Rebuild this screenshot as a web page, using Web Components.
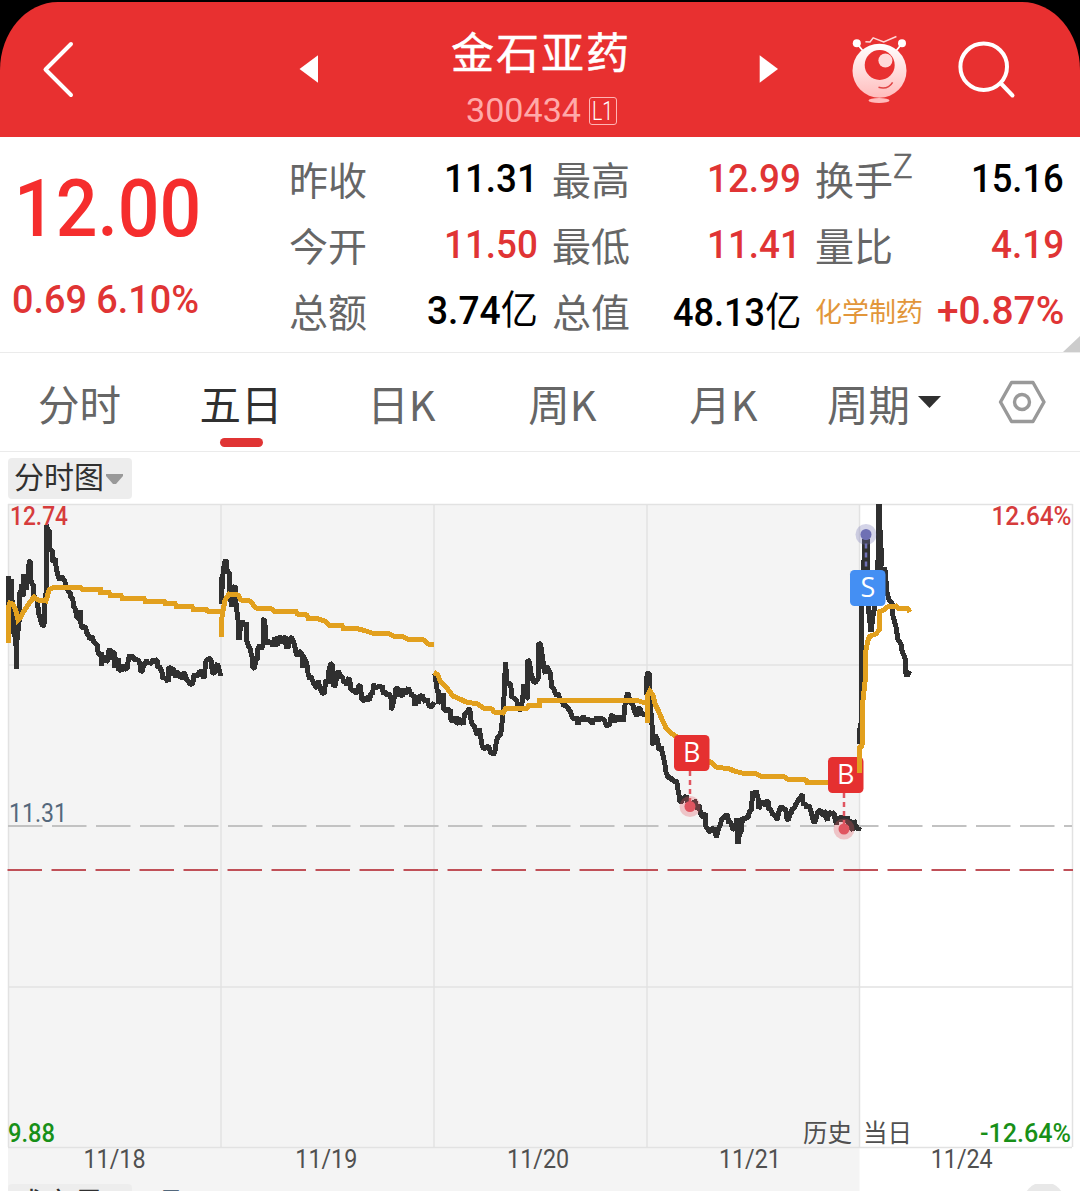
<!DOCTYPE html>
<html lang="zh-CN">
<head>
<meta charset="utf-8">
<title>金石亚药 300434</title>
<style>
  body {
    margin: 0;
    width: 1080px;
    height: 1191px;
    overflow: hidden;
    background: #fff;
    font-family: Roboto, "Noto Sans CJK SC", sans-serif;
  }
</style>
</head>
<body>
<stock-page></stock-page>

<script>
// Text squeezed to a given width, the digits are narrower than Roboto
class FitText extends HTMLElement {
  constructor() {
    super();
    this.attachShadow({mode: 'open'});
    this.shadowRoot.innerHTML = `<style>
      :host { display: block; flex: none; white-space: nowrap; line-height: 1.2; }
      span { display: inline-block; transform-origin: 0 50%; }
      ::slotted(i) { font-style: normal; font-weight: 400; }
    </style><span><slot></slot></span>`;
  }

  connectedCallback() {
    const span = this.shadowRoot.querySelector('span');
    const width = Number(this.getAttribute('w'));
    this.style.width = width + 'px';
    this.style.fontSize = this.getAttribute('size') + 'px';
    span.style.transform = `scaleX(${width / span.offsetWidth})`;
  }
}

// Red title bar
class StockHeader extends HTMLElement {
  constructor() {
    super();
    this.attachShadow({mode: 'open'});
    this.shadowRoot.innerHTML = `<style>
      :host { display: block; height: 137px; background: #000; }
      header {
        display: grid;
        grid-template-columns: 280px 60px 400px 60px 140px 140px;
        height: 135px;
        margin: 0;
        background: #e83030;
        border-radius: 58px 58px 0 0 / 68px 68px 0 0;
        color: #fff;
      }
      .wrap { padding-top: 2px; }
      svg { display: block; }
      .name { display: flex; flex-direction: column; align-items: center; }
      h1 {
        margin: 15px 0 0 2px;
        font: 400 43px/66px "Noto Sans CJK SC", sans-serif;
        letter-spacing: 2px;
        -webkit-text-stroke: .5px #fff;
      }
      .code { display: flex; align-items: center; gap: 8px; margin: 13px 0 0 2px; height: 30px; }
      .num { color: #ffa9a9; }
      .level {
        box-sizing: border-box;
        width: 28px;
        height: 28px;
        padding-left: 2px;
        border: 1.5px solid #ffb4b4;
        border-radius: 3px;
        font-weight: 300;
      }
      .level fit-text { line-height: 26px; }
    </style>
    <div class="wrap"><header>
      <svg width="280" height="135" viewBox="0 2 280 135" fill="none" stroke="#fff" stroke-width="4" stroke-linecap="round" stroke-linejoin="round">
        <path d="M71 44 45.500 69.500 71 95"/>
      </svg>
      <svg width="60" height="135" viewBox="280 2 60 135"><path d="M299.500 69 318 55.300V82.700Z" fill="#fff"/></svg>
      <div class="name">
        <h1><slot></slot></h1>
        <div class="code">
          <fit-text class="num" w="115" size="33.5">300434</fit-text>
          <div class="level"><fit-text w="21" size="26">L1</fit-text></div>
        </div>
      </div>
      <svg width="60" height="135" viewBox="740 2 60 135"><path d="M778 69 759.700 55.300V82.700Z" fill="#fff"/></svg>
      <svg width="140" height="135" viewBox="800 2 140 135" fill="none">
        <defs>
          <linearGradient id="g" x1="0" y1="0" x2="0" y2="1">
            <stop offset="0" stop-color="#fff"/>
            <stop offset="1" stop-color="#ffbcbc"/>
          </linearGradient>
        </defs>
        <path d="M857 43.500 863 51M902 43.500 896 51" stroke="#fff" stroke-width="1.800"/>
        <circle cx="856.800" cy="43.300" r="4" fill="#fff"/>
        <circle cx="902" cy="43.300" r="4" fill="#fff"/>
        <path d="M865.400 41.700 870 42 873.200 37.800 883.700 42 896.400 36.500" stroke="#ffd8d8" stroke-width="1.500"/>
        <circle cx="879.500" cy="70.700" r="27" fill="url(#g)"/>
        <circle cx="879.700" cy="65" r="15" fill="#e83030"/>
        <circle cx="885.400" cy="60.500" r="7" fill="#ffdada"/>
        <path d="M878.500 87.300Q888 90 892.600 82.300" stroke="#e04444" stroke-width="1.500"/>
        <ellipse cx="879" cy="100.500" rx="10.500" ry="2.600" fill="#ffbcbc"/>
      </svg>
      <svg width="140" height="135" viewBox="940 2 140 135" fill="none" stroke="#fff" stroke-width="4" stroke-linecap="round">
        <circle cx="983.700" cy="66.700" r="23.300"/>
        <path d="M1001 83.500 1012.500 95.500"/>
      </svg>
    </header></div>`;
  }
}

// One label with its value
class QuoteItem extends HTMLElement {
  constructor() {
    super();
    this.attachShadow({mode: 'open'});
    this.shadowRoot.innerHTML = `<style>
      :host {
        display: flex;
        justify-content: space-between;
        align-items: center;
        height: 66px;
        color: #000;
      }
      :host([up]) { color: #e03434; }
      .label { font-size: 39px; line-height: 62px; padding-top: 6px; color: #666; white-space: nowrap; }
      .label ::slotted(sup) { font-size: 33px; line-height: 0; vertical-align: 17px; font-weight: 300; -webkit-text-stroke: .5px #666; }
      :host([industry]) .label { font-size: 27px; padding-top: 4px; color: #e2963a; }
      .value { font-weight: 500; margin-top: -1px; }
    </style>
    <div class="label"><slot name="label"></slot><slot name="mark"></slot></div>
    <div class="value"><slot></slot></div>`;
  }
}

class StockQuote extends HTMLElement {
  constructor() {
    super();
    this.attachShadow({mode: 'open'});
    this.shadowRoot.innerHTML = `<style>
      :host {
        box-sizing: border-box;
        display: grid;
        grid-template-columns: 289px 1fr;
        height: 216px;
        position: relative;
        border-bottom: 1.500px solid #ebebeb;
      }
      .price { color: #f52d2d; font-weight: 500; padding: 24px 0 0 14px; }
      .change { color: #e03434; padding: 19px 0 0 12px; font-weight: 500; }
      .items {
        display: grid;
        grid-template-columns: repeat(3, 249px);
        grid-auto-rows: 66px;
        column-gap: 14px;
        padding-top: 9px;
      }
      .low { padding-top: 5px; }
      /* more-data fold lies over the corner */
      .fold { position: absolute; right: 0; bottom: 0; }
    </style>
    <div>
      <fit-text class="price" w="187" size="80.5">12.00</fit-text>
      <fit-text class="change" w="187" size="39">0.69 6.10%</fit-text>
    </div>
    <div class="items">
      <quote-item><span slot="label">昨收</span><fit-text w="94" size="39.5">11.31</fit-text></quote-item>
      <quote-item up><span slot="label">最高</span><fit-text w="94" size="39.5">12.99</fit-text></quote-item>
      <quote-item><span slot="label">换手</span><sup slot="mark">Z</sup><fit-text w="93" size="39.5">15.16</fit-text></quote-item>
      <quote-item up><span slot="label">今开</span><fit-text w="94" size="39.5">11.50</fit-text></quote-item>
      <quote-item up><span slot="label">最低</span><fit-text w="94" size="39.5">11.41</fit-text></quote-item>
      <quote-item up><span slot="label">量比</span><fit-text w="73" size="39.5">4.19</fit-text></quote-item>
      <quote-item><span slot="label">总额</span><fit-text w="111" size="39.5">3.74<i>亿</i></fit-text></quote-item>
      <quote-item><span slot="label">总值</span><fit-text class="low" w="128" size="39.5">48.13<i>亿</i></fit-text></quote-item>
      <quote-item up industry><span slot="label">化学制药</span><fit-text w="127" size="39.5">+0.87%</fit-text></quote-item>
    </div>
    <svg class="fold" width="17" height="16"><path d="M17 0V16H0Z" fill="#ccc"/></svg>`;
  }
}

class PeriodTabs extends HTMLElement {
  constructor() {
    super();
    this.attachShadow({mode: 'open'});
    this.shadowRoot.innerHTML = `<style>
      :host {
        box-sizing: border-box;
        display: grid;
        grid-template-columns: repeat(5, 161px) 158px 117px;
        height: 99px;
        border-bottom: 1.500px solid #ebebeb;
        font: 400 41.500px/60px "Noto Sans CJK SC", sans-serif;
        color: #666;
      }
      .tab { display: flex; flex-direction: column; align-items: center; padding: 20px 2px 0 0; }
      .active { color: #303030; padding-right: 1px; }
      .active::after { content: ""; width: 43px; height: 9px; margin-top: 5px; border-radius: 5px; background: #e03434; }
      .more { flex-direction: row; align-items: flex-start; justify-content: center; gap: 8px; padding-right: 0; }
      .more svg { margin-top: 23px; }
      .set { padding: 27px 0 0 35px; }
      .set svg { display: block; }
    </style>
    <div class="tab">分时</div>
    <div class="tab active">五日</div>
    <div class="tab">日K</div>
    <div class="tab">周K</div>
    <div class="tab">月K</div>
    <div class="tab more">周期<svg width="23" height="12"><path d="M0 0H23L11.500 12Z" fill="#303030"/></svg></div>
    <div class="set"><svg width="48" height="44" viewBox="998 380 48 44" fill="none" stroke="#999" stroke-width="3.400" stroke-linejoin="round">
      <path d="M1011.500 382.500H1033L1044 402 1033 421.500H1011.500L1000.500 402Z"/>
      <circle cx="1022" cy="402" r="7.500"/>
    </svg></div>`;
  }
}

// Grey drop-down above a chart
class ChartPicker extends HTMLElement {
  constructor() {
    super();
    this.attachShadow({mode: 'open'});
    this.shadowRoot.innerHTML = `<style>
      :host {
        box-sizing: border-box;
        display: flex;
        align-items: flex-start;
        gap: 2px;
        width: 124px;
        height: 41px;
        padding-left: 6px;
        border-radius: 4px;
        background: #ededed;
        color: #303030;
        font: 400 30px/35px "Noto Sans CJK SC", sans-serif;
        white-space: nowrap;
      }
      svg { flex: none; margin-top: 16px; }
    </style><div><slot></slot></div><svg width="17" height="10"><path d="M0 0H17V2L10 10H7L0 2Z" fill="#999"/></svg>`;
  }
}

// One entry for each trading day: price line and average line
const DAYS = [
  {
    price: '8,576 8,606 11,579 12,600 14,634 16,646 16.500,669 17,640 19,622 19,594 22,584 23,597 24,574 26,590 26,574 28,584 28,572 30,561 31,580 33,584 34,596 37,600 39,615 41,622 44,625 45,600 46.500,590 46.500,525 49,530 50,549 53,552 52,560 55,558 56,566 58,575 60,578 63,579 65,582 67,588 70,592 71,598 75,608 77,618 80,610 81,624 84,627 87,634 92,636 93,640 97,644 97,648 101,652 101,666 104,656 106,662 110,649 112,660 114,652 115,668 118,658 118,671 123,665 126,669 128,662 131,657 136,660 139,661 141,672 144,662 145,665 150,664 153,659 157,660 158,668 162,672 163,679 168,682 168,669 174,668 173,676 178,672 183,678 184,672 187,680 191,684 195,674 198,675 201,672 204,678 206,661 211,660 213,673 216,666 219,669 221,673',
    avg: '8,643 8,608 10,603 13,604 16,611 18,620 20,618 24,611 30,602 34,597 38,600 46,601 49,590 54,587 80,587 82,589 100,589 100,592 109,592 110,595 121,595 122,598 144,598 145,601 164,601 165,603 175,603 176,606 192,606 193,609 206,609 207,611 221,612'
  },
  {
    price: '221,577 221,604 223,574 226,560 228,572 230,577 229,596 232,607 231,589 235,586 236,603 238,620 239,640 241,623 246,622 246,639 250,648 252,656 253,668 257,660 258,648 263,645 263,620 265,625 266,642 271,640 273,644 277,638 276,644 280,636 282,642 285,636 287,647 290,638 293,640 296,653 300,652 303,662 303,668 302,655 307,665 308,673 311,676 314,684 319,685 321,691 324,694 326,680 328,684 329,670 332,664 334,687 337,674 341,677 345,682 349,678 351,690 356,694 360,685 362,700 368,699 373,690 373,684 377,687 382,685 384,692 388,694 391,699 391,710 395,697 396,688 401,694 407,690 412,697 418,704 419,695 424,700 428,703 434,702',
    avg: '221,637 222,617 225,600 229,594 238,595 241,600 250,601 256,608 272,609 274,611 296,611 297,614 307,615 308,618 315,618 325,621 329,625 342,625 343,628 355,628 366,631 372,633 390,634 393,636 404,637 407,639 424,640 428,644 434,645'
  },
  {
    price: '434,673 436,682 438,690 438,704 443,693 444,710 450,709 451,720 456,716 456,724 459,718 463,725 465,713 469,708 471,720 475,728 480,733 482,745 488,746 492,751 495,751 497,739 500,736 502,723 504,697 505.500,662 507,683 511,688 512,698 517,702 521,711 523,695 524,684 528,698 527.500,660 531,673 534,683 538,680 539,643 541.500,650 544,669 550,672 552,688 558,693 560,700 564,706 569,710 572,717 579,721 583,716 588,720 600,719 605,722 608,725 611,717 615,720 620,722 624,715 625,705 628,693 631,704 637,716 640,708 645,712',
    avg: '434,672 438,675 440,681 446,687 453,696 462,700 466,702 478,704 483,708 492,709 494,712 503,713 506,708 527,708 529,705 539,705 539,700 636,700 642,702 648,703'
  },
  {
    price: '646,695 646,683 649,673 650,700 652,725 652,743 656,736 659,750 661,746 664,760 666,772 671,778 676,780 678,790 680,802 683,797 690,803 699,805 702,817 705,813 706,827 712,828 717,835 720,826 726,815 730,821 734,829 737,818 738,844 741,832 743,818 748,818 751,811 753,791 758,798 759,809 762,802 768,801 769,810 773,815 777,820 780,808 785,808 787,819 792,809 796,804 802,794 804,804 810,808 814,823 819,811 824,811 826,818 831,814 835,819 844,820 850,820 853,830 854,820 860,827',
    avg: '647,723 647,697 650,691 653,695 655,704 658,710 661,717 666,728 671,733 677,737 688,746 700,757 712,763 716,767 730,769 734,771 742,773 757,774 760,776 785,777 787,779 806,780 807,782 840,782'
  },
  {
    price: '859,744 859,734 861.500,720 861.500,600 863,590 864,560 864.500,540 867,537 867.500,590 869,614 871,632 873,616 876,600 878,560 879,504 880,530 882,566 879,540 881,590 884,568 885,570 887,592 889,600 892,603 893,616 896,627 898,640 901,644 902,651 905,658 906,674 907,676 910,671',
    avg: '859.500,773 860,747 862,746 863,700 865,682 865,655 868,640 870,636 876,634 879,630 879,612 884,610 887,607 896,606 898,608 907,608 910,612'
  }
];

// Trades: letter, colour, badge corner, then the dot on the price line
const TRADES = [
  {type: 'B', fill: '#e53030', dot: '#e05560', x: 674, y: 735, cx: 690, cy: 806.500},
  {type: 'B', fill: '#e53030', dot: '#e05560', x: 828, y: 757, cx: 844, cy: 829},
  {type: 'S', fill: '#448ff3', dot: '#6f70b4', x: 850, y: 570, cx: 866, cy: 534.500}
];

// Minute ticks between the recorded points
function addTicks(points) {
  const list = points.split(' ').map(p => p.split(',').map(Number));
  const out = [];
  let seed = 7;
  list.forEach(([x, y], i) => {
    out.push(`${x},${y}`);
    const next = list[i + 1];
    if (!next) return;
    const dx = next[0] - x;
    const dy = next[1] - y;
    if (Math.abs(dy) > 14) return;
    for (let s = 1.5; s < dx; s += 1.5) {
      seed = (seed * 16807) % 2147483647;
      const shift = (seed / 2147483647 - 0.5) * 10;
      out.push(`${(x + s).toFixed(1)},${(y + dy * s / dx + shift).toFixed(1)}`);
    }
  });
  return out.join(' ');
}

class FiveDayChart extends HTMLElement {
  constructor() {
    super();
    this.attachShadow({mode: 'open'});
    const line = (points, cls) => `<polyline class="${cls}" points="${points}"/>`;
    const label = (text, x, y, w, color, cls = '') =>
      `<text class="${cls}" x="${x}" y="${y}" fill="${color}" textLength="${w}" lengthAdjust="spacingAndGlyphs">${text}</text>`;
    const trade = t => {
      const start = t.cy > t.y ? t.y + 36 : t.cy;
      const end = t.cy > t.y ? t.cy : t.y;
      return `<path d="M${t.cx} ${start}V${end}" stroke="${t.dot}" stroke-width="2.500" stroke-dasharray="5 4"/>
        <circle cx="${t.cx}" cy="${t.cy}" r="10.500" fill="${t.dot}" opacity=".3"/>
        <circle cx="${t.cx}" cy="${t.cy}" r="5.500" fill="${t.dot}"/>
        <rect x="${t.x}" y="${t.y}" width="35.500" height="36" rx="4.500" fill="${t.fill}"/>
        <text class="trade" x="${t.x + 17.8}" y="${t.y + 27}" fill="#fff" text-anchor="middle">${t.type}</text>`;
    };
    const dates = ['11/18', '11/19', '11/20', '11/21', '11/24'];

    this.shadowRoot.innerHTML = `<style>
      :host { display: block; height: 691px; margin-top: -4px; }
      svg { display: block; }
      .grid { stroke: #e2e2e2; stroke-width: 1.500; fill: none; }
      .price { fill: none; stroke: #303030; stroke-width: 5; stroke-linejoin: bevel; shape-rendering: crispEdges; }
      .avg { fill: none; stroke: #e2a01e; stroke-width: 5; shape-rendering: crispEdges; }
      text { font: 500 25px Roboto, sans-serif; }
      .date { font-weight: 400; }
      .cjk { font: 400 25px "Noto Sans CJK SC", sans-serif; }
      .trade { font: 400 27px "Open Sans", sans-serif; }
    </style>
    <svg width="1080" height="691" viewBox="0 500 1080 691">
      <rect x="8" y="504" width="851.500" height="687" fill="#f4f4f4"/>
      <path class="grid" d="M8 504.500H1072.500M8 665H1072M8 987H1072M8 1147.500H1072M8.500 504V1147M221 504V1147M434 504V1147M647 504V1147M859.500 504V1147M1072.500 504V1147"/>
      <path d="M8 826H1072" stroke="#c2c2c2" stroke-width="2" stroke-dasharray="34.500 9.500"/>
      <path d="M7.500 870H1073" stroke="#c05058" stroke-width="2" stroke-dasharray="34.500 9.500"/>
      ${label('12.74', 10, 524.5, 58, '#d63c3c')}
      ${label('12.64%', 991.5, 524.5, 80, '#d63c3c')}
      ${label('11.31', 9, 821.5, 58, '#54687c', 'date')}
      ${label('9.88', 8, 1142, 47, '#189018')}
      ${label('-12.64%', 980, 1142, 91, '#189018')}
      ${label('历史', 803, 1142, 49, '#505050', 'cjk')}
      ${label('当日', 863, 1142, 49, '#505050', 'cjk')}
      ${dates.map((d, i) => label(d, 83.5 + i * 211.8, 1167.5, 62, '#505050', 'date')).join('')}
      ${DAYS.map((d, i) => line(i < 4 ? addTicks(d.price) : d.price, 'price')).join('')}
      ${DAYS.slice(0, 4).map(d => line(d.avg, 'avg')).join('')}
      ${TRADES.map(trade).join('')}
      ${line(DAYS[4].avg, 'avg')}
    </svg>`;
  }
}

class StockPage extends HTMLElement {
  constructor() {
    super();
    this.attachShadow({mode: 'open'});
    this.shadowRoot.innerHTML = `<style>
      :host { display: block; width: 1080px; height: 1191px; overflow: hidden; }
      .picker { height: 46px; padding: 6px 0 0 8px; }
      /* volume row, cut off by the bottom edge */
      .volume {
        position: relative;
        display: flex;
        align-items: flex-start;
        margin-top: -7px;
        height: 7px;
        overflow: hidden;
        padding-left: 8px;
      }
      .vol { margin: -2px 0 0 27px; font: 400 24px/35px "Noto Sans CJK SC", sans-serif; color: #54687c; }
      .round { flex: none; width: 42px; height: 42px; margin: -2px 15px 0 auto; border-radius: 50%; background: #e8e8e8; }
    </style>
    <stock-header>金石亚药</stock-header>
    <stock-quote></stock-quote>
    <period-tabs></period-tabs>
    <div class="picker"><chart-picker>分时图</chart-picker></div>
    <five-day-chart></five-day-chart>
    <div class="volume">
      <chart-picker>成交量</chart-picker>
      <span class="vol">量</span>
      <div class="round"></div>
    </div>`;
  }
}

customElements.define('fit-text', FitText);
customElements.define('stock-header', StockHeader);
customElements.define('quote-item', QuoteItem);
customElements.define('stock-quote', StockQuote);
customElements.define('period-tabs', PeriodTabs);
customElements.define('chart-picker', ChartPicker);
customElements.define('five-day-chart', FiveDayChart);
customElements.define('stock-page', StockPage);
</script>
</body>
</html>
